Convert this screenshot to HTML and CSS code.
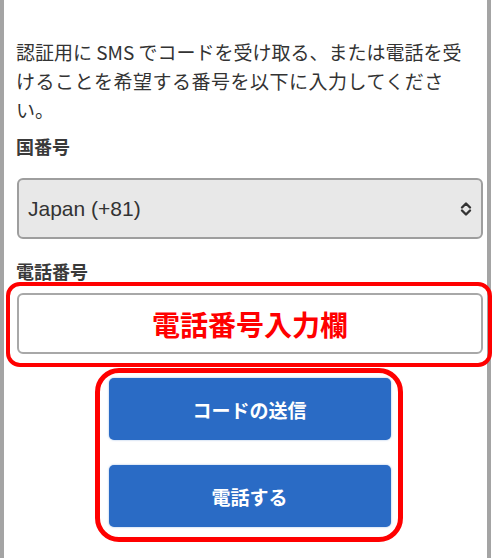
FILE: index.html
```html
<!DOCTYPE html>
<html lang="ja">
<head>
  <meta charset="UTF-8">
  <title>電話番号の登録</title>
  <link rel="stylesheet" href="styles.css">
</head>
<body>
  <div class="frame">
    <p class="intro">認証用に SMS でコードを受け取る、または電話を受<br><span class="wide">けることを希望する番号を以下に入力してくださ</span><br>い。</p>

    <div class="label">国番号</div>
    <div class="select">
      <span>Japan (+81)</span>
      <svg class="chevron" width="14" height="16" viewBox="0 0 14 16">
        <path d="M3 6.5 L7 2.5 L11 6.5 M3 9.5 L7 13.5 L11 9.5" fill="none" stroke="#333" stroke-width="2.4" stroke-linecap="round" stroke-linejoin="round"/>
      </svg>
    </div>

    <div class="label label-phone">電話番号</div>
    <div class="phone-input">電話番号入力欄</div>

    <div class="buttons">
      <button class="btn">コードの送信</button>
      <button class="btn">電話する</button>
    </div>

    <!-- 注釈の赤枠 -->
    <div class="mark mark-input"></div>
    <div class="mark mark-buttons"></div>
  </div>
</body>
</html>
```

FILE: styles.css
```css
body {
  margin: 0;
  background-color: #fff;
  font-family: "Noto Sans CJK JP", sans-serif;
  color: #333;
}
.frame {
  position: relative;
  width: 491px;
  height: 558px;
  box-sizing: border-box;
  border-left: 4px solid #a4a4a4;
  border-right: 4px solid #a4a4a4;
  padding: 37px 4px 0 12px;
}
.intro {
  margin: 0;
  font-size: 19px;
  line-height: 29px;
  white-space: nowrap;
  color: #333;
}
.wide {
  letter-spacing: 0.5px;
}
.label {
  margin-top: 12px;
  font-size: 18px;
  line-height: 20px;
  font-weight: bold;
  color: #3a3a3a;
}
.label-phone {
  margin-top: 22px;
}
.select {
  margin-top: 22px;
  margin-left: 1px;
  height: 61px;
  box-sizing: border-box;
  display: flex;
  align-items: center;
  justify-content: space-between;
  padding: 0 8px 0 9px;
  background-color: #e8e8e8;
  border: 2px solid #9e9e9e;
  border-radius: 6px;
  font-family: "Liberation Sans", sans-serif;
  font-size: 21px;
  color: #333;
}
.phone-input {
  margin-top: 12px;
  margin-left: 1px;
  height: 61px;
  box-sizing: border-box;
  display: flex;
  align-items: center;
  justify-content: center;
  background-color: #fff;
  border: 2px solid #a8a8a8;
  border-radius: 6px;
  font-size: 28px;
  font-weight: bold;
  color: #ff0000;
}
.buttons {
  margin-top: 24px;
  display: flex;
  flex-direction: column;
  align-items: center;
  gap: 25px;
}
.btn {
  width: 282px;
  height: 62px;
  border: none;
  border-radius: 5px;
  background-color: #2a6bc5;
  color: #fff;
  font-family: "Noto Sans CJK JP", sans-serif;
  font-size: 19px;
  font-weight: bold;
  box-shadow: 0 0 2px rgba(42, 107, 197, 0.5);
}
.mark {
  position: absolute;
  box-sizing: border-box;
  border: 4px solid #ff0000;
}
.mark-input {
  left: 2px;
  top: 282px;
  width: 486px;
  height: 85px;
  border-radius: 14px;
}
.mark-buttons {
  left: 91px;
  top: 368px;
  width: 308px;
  height: 174px;
  border-width: 5px;
  border-radius: 24px;
}
```
